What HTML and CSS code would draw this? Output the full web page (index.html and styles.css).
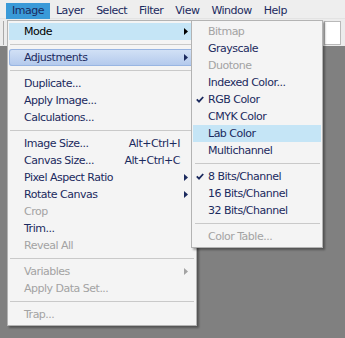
FILE: index.html
```html
<!DOCTYPE html>
<html>
<head>
<meta charset="utf-8">
<link rel="stylesheet" href="styles.css">
</head>
<body>
<div class="menubar">
  <span class="mb-item active">Image</span>
  <span class="mb-item">Layer</span>
  <span class="mb-item">Select</span>
  <span class="mb-item">Filter</span>
  <span class="mb-item">View</span>
  <span class="mb-item">Window</span>
  <span class="mb-item">Help</span>
</div>
<div class="options">
  <div class="grip"></div>
  <div class="field"></div>
</div>

<div class="menu main">
  <div class="row hot dark"><span class="ck"></span><span class="lbl">Mode</span><svg class="arrow" width="4" height="7" viewBox="0 0 4 7"><path d="M0 0L4 3.5L0 7z" fill="#000"/></svg></div>
  <div class="sep"></div>
  <div class="row sel"><span class="ck"></span><span class="lbl">Adjustments</span><svg class="arrow" width="4" height="7" viewBox="0 0 4 7"><path d="M0 0L4 3.5L0 7z" fill="#1b2a5e"/></svg></div>
  <div class="sep"></div>
  <div class="row"><span class="ck"></span><span class="lbl">Duplicate...</span></div>
  <div class="row"><span class="ck"></span><span class="lbl">Apply Image...</span></div>
  <div class="row"><span class="ck"></span><span class="lbl">Calculations...</span></div>
  <div class="sep"></div>
  <div class="row"><span class="ck"></span><span class="lbl">Image Size...</span><span class="key">Alt+Ctrl+I</span></div>
  <div class="row"><span class="ck"></span><span class="lbl">Canvas Size...</span><span class="key">Alt+Ctrl+C</span></div>
  <div class="row"><span class="ck"></span><span class="lbl">Pixel Aspect Ratio</span><svg class="arrow" width="4" height="7" viewBox="0 0 4 7"><path d="M0 0L4 3.5L0 7z" fill="#1b2a5e"/></svg></div>
  <div class="row"><span class="ck"></span><span class="lbl">Rotate Canvas</span><svg class="arrow" width="4" height="7" viewBox="0 0 4 7"><path d="M0 0L4 3.5L0 7z" fill="#1b2a5e"/></svg></div>
  <div class="row off"><span class="ck"></span><span class="lbl">Crop</span></div>
  <div class="row"><span class="ck"></span><span class="lbl">Trim...</span></div>
  <div class="row off"><span class="ck"></span><span class="lbl">Reveal All</span></div>
  <div class="sep"></div>
  <div class="row off"><span class="ck"></span><span class="lbl">Variables</span><svg class="arrow" width="4" height="7" viewBox="0 0 4 7"><path d="M0 0L4 3.5L0 7z" fill="#a3a3a3"/></svg></div>
  <div class="row off"><span class="ck"></span><span class="lbl">Apply Data Set...</span></div>
  <div class="sep"></div>
  <div class="row off"><span class="ck"></span><span class="lbl">Trap...</span></div>
</div>

<div class="menu sub">
  <div class="row off"><span class="ck"></span><span class="lbl">Bitmap</span></div>
  <div class="row"><span class="ck"></span><span class="lbl">Grayscale</span></div>
  <div class="row off"><span class="ck"></span><span class="lbl">Duotone</span></div>
  <div class="row"><span class="ck"></span><span class="lbl">Indexed Color...</span></div>
  <div class="row"><span class="ck"><svg width="8" height="7" viewBox="0 0 8 7"><path d="M0.8 3.4L3 5.6L7.2 1" stroke="#1b2a5e" stroke-width="1.8" fill="none"/></svg></span><span class="lbl">RGB Color</span></div>
  <div class="row"><span class="ck"></span><span class="lbl">CMYK Color</span></div>
  <div class="row hot"><span class="ck"></span><span class="lbl">Lab Color</span></div>
  <div class="row"><span class="ck"></span><span class="lbl">Multichannel</span></div>
  <div class="sep"></div>
  <div class="row"><span class="ck"><svg width="8" height="7" viewBox="0 0 8 7"><path d="M0.8 3.4L3 5.6L7.2 1" stroke="#1b2a5e" stroke-width="1.8" fill="none"/></svg></span><span class="lbl">8 Bits/Channel</span></div>
  <div class="row"><span class="ck"></span><span class="lbl">16 Bits/Channel</span></div>
  <div class="row"><span class="ck"></span><span class="lbl">32 Bits/Channel</span></div>
  <div class="sep"></div>
  <div class="row off"><span class="ck"></span><span class="lbl">Color Table...</span></div>
</div>
</body>
</html>
```

FILE: styles.css
```css
* { box-sizing: border-box; }

body {
  margin: 0;
  width: 345px;
  height: 338px;
  overflow: hidden;
  position: relative;
  background: #808080;
  font-family: "DejaVu Sans", sans-serif;
  font-size: 11px;
  letter-spacing: -0.5px;
  color: #1b2a5e;
}

.menubar {
  height: 19px;
  background: #eeeeee;
  display: flex;
  align-items: flex-start;
  padding: 3px 0 0 6px;
  border-bottom: 1px solid #e3e3e3;
}

.mb-item {
  height: 16px;
  line-height: 15px;
  padding: 0 6px;
  white-space: nowrap;
}

.mb-item.active {
  background: #3a9ad8;
}

.options {
  height: 27px;
  background: #ececec;
  display: flex;
  align-items: flex-end;
  padding: 0 4px 1px 3px;
}

.grip {
  width: 1px;
  height: 24px;
  background: #a9a9a9;
}

.field {
  margin-left: auto;
  margin-bottom: 0;
  width: 17px;
  height: 24px;
  background: #ffffff;
  border: 1px solid #b9b9b9;
}

.menu {
  position: absolute;
  top: 20px;
  background: #f4f4f4;
  border: 1px solid #b3b3b3;
  padding: 2px 1px;
  box-shadow: 2px 2px 2px rgba(0, 0, 0, 0.35);
}

.main {
  left: 7px;
  width: 190px;
  z-index: 1;
}

.sub {
  left: 191px;
  width: 132px;
  z-index: 2;
}

.row {
  display: flex;
  align-items: center;
  height: 17px;
  padding: 0 7px 0 2px;
  white-space: nowrap;
}

.ck {
  width: 13px;
  flex: none;
  display: flex;
  align-items: center;
  padding-left: 1px;
}

.lbl {
  line-height: 17px;
}

.key {
  margin-left: auto;
  margin-right: 8px;
}

.arrow {
  margin-left: auto;
  flex: none;
}

.row.hot {
  background: #c5e5f6;
}

.row.dark {
  color: #000;
}

.row.sel {
  border-radius: 3px;
  background: linear-gradient(#d3e2f6, #b2c8ec);
  box-shadow: inset 0 0 0 1px #98b5e2;
}

.row.off {
  color: #a3a3a3;
}

.sep {
  height: 9px;
  display: flex;
  align-items: center;
  padding: 0 1px;
}

.sep::before {
  content: "";
  flex: 1;
  height: 1px;
  background: #c9c9c9;
}

.sub .sep {
  padding: 0 1px 0 2px;
}
```
